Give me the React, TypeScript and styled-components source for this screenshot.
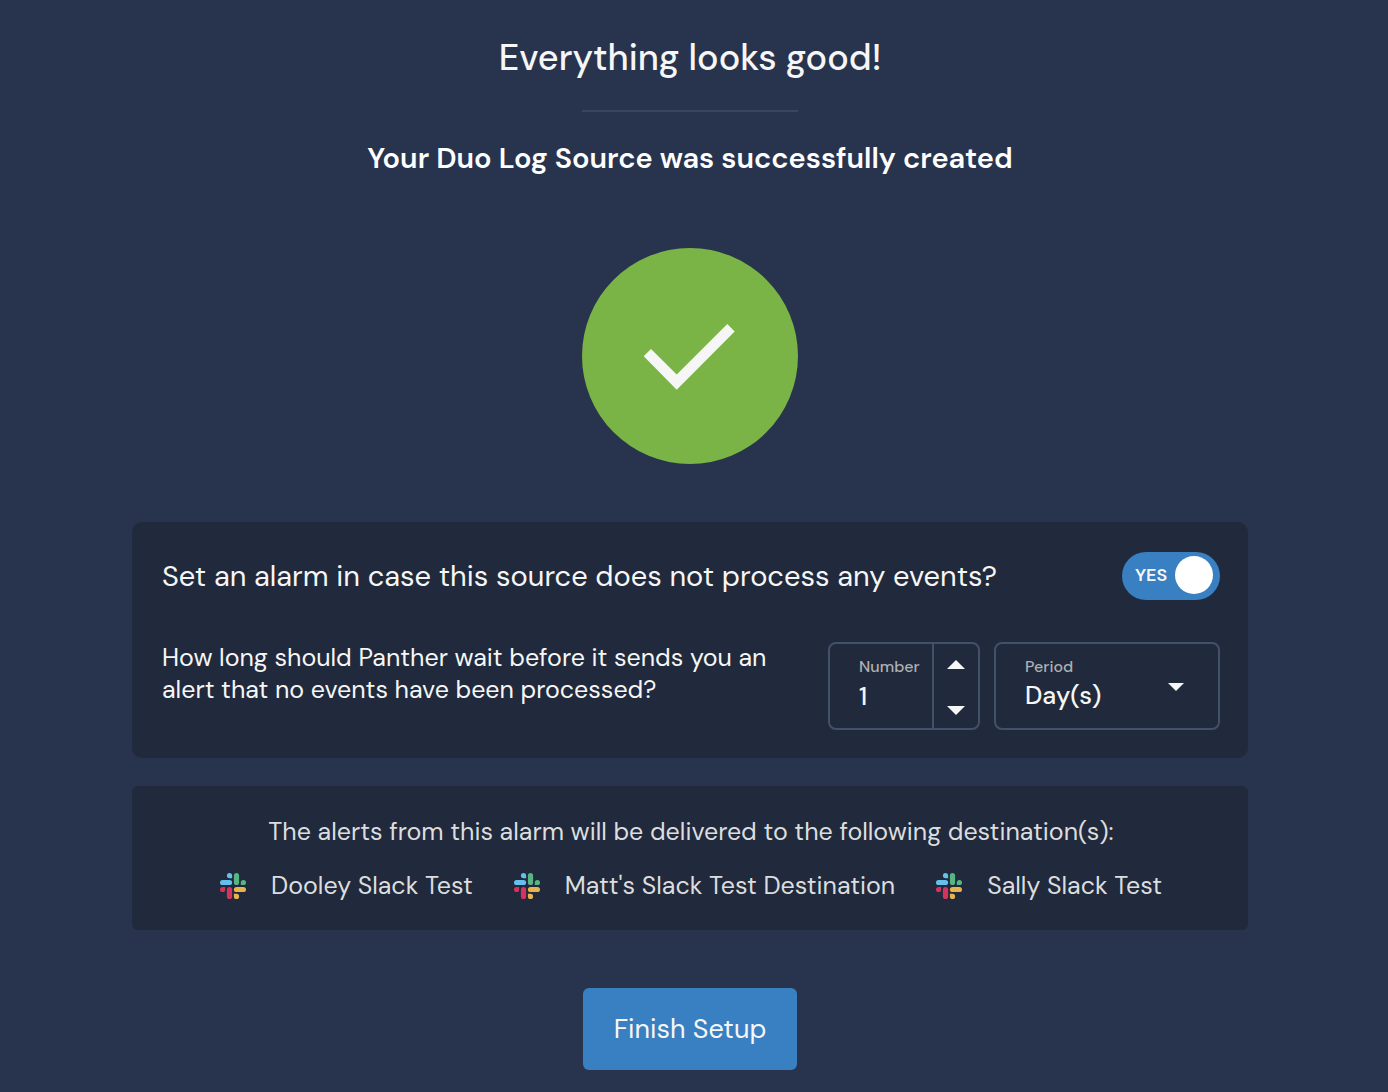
import React, { useState } from "react";
import styled, { createGlobalStyle } from "styled-components";

const GlobalStyle = createGlobalStyle`
  *, *::before, *::after { box-sizing: border-box; }
  body {
    margin: 0;
    background: #28344d;
    color: #f6f6f6;
    font-family: "DM Sans", Inter, "Liberation Sans", sans-serif;
    font-size: 25px;
    line-height: 32px;
  }
  button, input, select { font: inherit; color: inherit; }
  h1, h2, h3, p, ul { margin: 0; padding: 0; }
`;

const Page = styled.main`
  display: flex;
  flex-direction: column;
  align-items: center;
  padding: 34px 140px 22px 132px;
`;

const Title = styled.h1`
  font-size: 36px;
  line-height: 48px;
  font-weight: 500;
`;

const Divider = styled.hr`
  width: 216px;
  height: 2px;
  margin: 28px 0;
  border: 0;
  background: #37455f;
`;

const Subtitle = styled.h2`
  font-size: 29px;
  line-height: 36px;
  font-weight: 600;
  color: #fff;
`;

const SuccessMark = styled.svg`
  width: 216px;
  height: 216px;
  margin: 72px 0 58px;
`;

const Card = styled.section`
  align-self: stretch;
  border-radius: 10px;
  background: #202a3c;
  padding: 30px 28px 28px 30px;
`;

const AlarmCard = styled(Card)`
  display: flex;
  flex-direction: column;
  gap: 42px;
`;

const DestinationCard = styled(Card)`
  display: flex;
  flex-direction: column;
  align-items: center;
  gap: 22px;
  margin-top: 28px;
  border-radius: 6px;
  color: #dcdddf;
`;

const Row = styled.div<{ $align: string }>`
  display: flex;
  justify-content: space-between;
  align-items: ${(p) => p.$align};
  gap: 24px;
`;

const Question = styled.h3`
  font-size: 29px;
  line-height: 36px;
  font-weight: 400;
`;

const Hint = styled.p`
  max-width: 630px;
`;

const Switch = styled.label<{ $on: boolean }>`
  position: relative;
  display: flex;
  flex: none;
  align-items: center;
  justify-content: space-between;
  flex-direction: ${(p) => (p.$on ? "row" : "row-reverse")};
  width: 98px;
  height: 48px;
  padding: 0 7px 2px 13px;
  border-radius: 24px;
  background: ${(p) => (p.$on ? "#3880c1" : "#435069")};
  font-size: 18px;
  font-weight: 600;
  cursor: pointer;
`;

const SwitchInput = styled.input`
  position: absolute;
  inset: 0;
  width: 100%;
  height: 100%;
  margin: 0;
  opacity: 0;
  cursor: pointer;
`;

const Knob = styled.span`
  width: 38px;
  height: 38px;
  border-radius: 50%;
  background: #fff;
`;

const Fields = styled.div`
  display: flex;
  flex: none;
  gap: 14px;
`;

const Field = styled.div<{ $width: number }>`
  position: relative;
  display: flex;
  width: ${(p) => p.$width}px;
  height: 88px;
  border: 2px solid #435069;
  border-radius: 8px;
`;

const FieldBody = styled.div`
  display: flex;
  flex: 1;
  flex-direction: column;
  min-width: 0;
  padding: 13px 0 0 29px;
`;

const FieldLabel = styled.label`
  font-size: 16px;
  line-height: 20px;
  font-weight: 500;
  color: #afb0b2;
`;

const NumberInput = styled.input`
  width: 100%;
  height: 38px;
  padding: 0;
  border: 0;
  outline: 0;
  background: transparent;
  font-weight: 500;
  appearance: textfield;
  &::-webkit-inner-spin-button { appearance: none; margin: 0; }
`;

const Select = styled.select`
  width: 100%;
  height: 38px;
  padding: 0;
  border: 0;
  outline: 0;
  background: transparent;
  font-weight: 500;
  appearance: none;
  option { background: #202a3c; }
`;

const Stepper = styled.div`
  display: flex;
  flex: none;
  flex-direction: column;
  justify-content: space-between;
  width: 46px;
  border-left: 2px solid #435069;
`;

const StepButton = styled.button`
  display: flex;
  align-items: center;
  justify-content: center;
  height: 38px;
  padding: 2px 0 0;
  border: 0;
  background: transparent;
  cursor: pointer;
`;

const SelectArrow = styled.svg`
  position: absolute;
  top: 39px;
  right: 34px;
  pointer-events: none;
`;

const Destinations = styled.ul`
  display: flex;
  flex-wrap: wrap;
  justify-content: center;
  gap: 0 41px;
  list-style: none;
`;

const Destination = styled.li`
  display: flex;
  align-items: center;
  gap: 25px;
`;

const FinishButton = styled.button`
  height: 82px;
  margin-top: 58px;
  padding: 0 31px;
  border: 0;
  border-radius: 6px;
  background: #3880c1;
  font-size: 27px;
  cursor: pointer;
`;

const SlackLogo = () => (
  <svg width="26" height="26" viewBox="0 0 26 26" aria-hidden="true">
    <g fill="#63c1ec">
      <path d="M9.5 0a2.6 2.6 0 0 0 0 5.2h2.6V2.6A2.6 2.6 0 0 0 9.5 0Z" />
      <rect y="6.9" width="12.1" height="5.2" rx="2.6" />
    </g>
    <g fill="#57b583">
      <path d="M26 9.5a2.6 2.6 0 0 0-5.2 0v2.6h2.6A2.6 2.6 0 0 0 26 9.5Z" />
      <rect x="13.9" width="5.2" height="12.1" rx="2.6" />
    </g>
    <g fill="#e8b34a">
      <path d="M16.5 26a2.6 2.6 0 0 0 0-5.2h-2.6v2.6a2.6 2.6 0 0 0 2.6 2.6Z" />
      <rect x="13.9" y="13.9" width="12.1" height="5.2" rx="2.6" />
    </g>
    <g fill="#d4335f">
      <path d="M0 16.5a2.6 2.6 0 0 0 5.2 0v-2.6H2.6A2.6 2.6 0 0 0 0 16.5Z" />
      <rect x="6.9" y="13.9" width="5.2" height="12.1" rx="2.6" />
    </g>
  </svg>
);

const destinations = ["Dooley Slack Test", "Matt's Slack Test Destination", "Sally Slack Test"];

export default function App() {
  const [alarm, setAlarm] = useState(true);
  const [count, setCount] = useState(1);
  const [period, setPeriod] = useState("Day(s)");

  return (
    <>
      <GlobalStyle />
      <Page>
        <Title>Everything looks good!</Title>
        <Divider />
        <Subtitle>Your Duo Log Source was successfully created</Subtitle>
        <SuccessMark viewBox="0 0 216 216" aria-hidden="true">
          <circle cx="108" cy="108" r="108" fill="#7ab346" />
          <path d="M145.3 76l7.4 7.4-58 58.3-33-33.4 7.3-7.3 25.7 25.6Z" fill="#f6f6f6" />
        </SuccessMark>

        <AlarmCard>
          <Row $align="center">
            <Question>Set an alarm in case this source does not process any events?</Question>
            <Switch $on={alarm}>
              <SwitchInput
                type="checkbox"
                role="switch"
                checked={alarm}
                onChange={(e) => setAlarm(e.target.checked)}
              />
              <span>{alarm ? "YES" : "NO"}</span>
              <Knob />
            </Switch>
          </Row>
          <Row $align="flex-start">
            <Hint>
              How long should Panther wait before it sends you an alert that no events have been processed?
            </Hint>
            <Fields>
              <Field $width={152}>
                <FieldBody>
                  <FieldLabel htmlFor="number">Number</FieldLabel>
                  <NumberInput
                    id="number"
                    type="number"
                    min={1}
                    value={count}
                    onChange={(e) => setCount(Number(e.target.value))}
                  />
                </FieldBody>
                <Stepper>
                  <StepButton type="button" aria-label="Increase" onClick={() => setCount(count + 1)}>
                    <svg width="18" height="9" viewBox="0 0 18 9">
                      <path d="M0 9 9 0l9 9Z" fill="#f6f6f6" />
                    </svg>
                  </StepButton>
                  <StepButton type="button" aria-label="Decrease" onClick={() => setCount(Math.max(1, count - 1))}>
                    <svg width="18" height="9" viewBox="0 0 18 9">
                      <path d="M0 0h18L9 9Z" fill="#f6f6f6" />
                    </svg>
                  </StepButton>
                </Stepper>
              </Field>
              <Field $width={226}>
                <FieldBody>
                  <FieldLabel htmlFor="period">Period</FieldLabel>
                  <Select id="period" value={period} onChange={(e) => setPeriod(e.target.value)}>
                    <option>Minute(s)</option>
                    <option>Hour(s)</option>
                    <option>Day(s)</option>
                  </Select>
                </FieldBody>
                <SelectArrow width="16" height="8" viewBox="0 0 16 8" aria-hidden="true">
                  <path d="M0 0h16L8 8Z" fill="#f6f6f6" />
                </SelectArrow>
              </Field>
            </Fields>
          </Row>
        </AlarmCard>

        <DestinationCard>
          <p>The alerts from this alarm will be delivered to the following destination(s):</p>
          <Destinations>
            {destinations.map((name) => (
              <Destination key={name}>
                <SlackLogo />
                <span>{name}</span>
              </Destination>
            ))}
          </Destinations>
        </DestinationCard>

        <FinishButton type="button">Finish Setup</FinishButton>
      </Page>
    </>
  );
}
